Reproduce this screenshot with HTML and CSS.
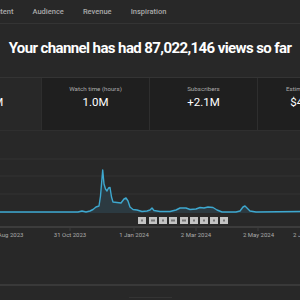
FILE: index.html
```html
<!DOCTYPE html>
<html lang="en">
<head>
  <meta charset="UTF-8">
  <meta name="viewport" content="width=device-width, initial-scale=1.0">
  <title>Channel analytics</title>
  <link rel="stylesheet" href="styles.css">
</head>

<body>
  <div class="studio">
    <!-- ===== TABS ===== -->
    <nav class="tabs">
      <a class="tab">Content</a>
      <a class="tab">Audience</a>
      <a class="tab">Revenue</a>
      <a class="tab">Inspiration</a>
    </nav>

    <!-- ===== HEADLINE ===== -->
    <h1 class="headline">Your channel has had 87,022,146 views so far</h1>

    <!-- ===== METRIC CARDS ===== -->
    <div class="cards">
      <div class="card active">
        <div class="card-label">Views</div>
        <div class="card-value">87.0M</div>
      </div>
      <div class="card">
        <div class="card-label">Watch time (hours)</div>
        <div class="card-value">1.0M</div>
      </div>
      <div class="card">
        <div class="card-label">Subscribers</div>
        <div class="card-value">+2.1M</div>
      </div>
      <div class="card">
        <div class="card-label">Estimated revenue</div>
        <div class="card-value">$440.4K</div>
      </div>
    </div>

    <!-- ===== CHART ===== -->
    <svg class="chart" width="300" height="105" viewBox="0 0 300 105">
      <line x1="0" y1="18" x2="300" y2="18" class="grid" />
      <line x1="0" y1="35" x2="300" y2="35" class="grid" />
      <line x1="0" y1="53" x2="300" y2="53" class="grid" />

      <path class="area" d="M0,71 L78,71 L82,70 L86,71 L90,70 L93,68.5 L96,66 L99,65 L100.5,55 L102.7,29 L104,43 L105.5,48 L107,50 L108.5,47 L110,46.5 L111.5,56 L113,61 L117,61.5 L121,62 L124,58 L126,57 L128,60 L130,66 L133,68.5 L137,69 L142,70.5 L147,70 L150,69 L152,67 L154,69.5 L160,70.5 L170,70.5 L176,69 L180,67 L186,67 L190,68.5 L196,68 L200,66.5 L204,67 L208,66 L213,66.5 L217,69 L222,71 L236,71 L240,70 L243,66 L245,65 L247,67 L250,70 L256,71 L300,70.5 L300,72 L0,72 Z" />
      <path class="trace" d="M0,71 L78,71 L82,70 L86,71 L90,70 L93,68.5 L96,66 L99,65 L100.5,55 L102.7,29 L104,43 L105.5,48 L107,50 L108.5,47 L110,46.5 L111.5,56 L113,61 L117,61.5 L121,62 L124,58 L126,57 L128,60 L130,66 L133,68.5 L137,69 L142,70.5 L147,70 L150,69 L152,67 L154,69.5 L160,70.5 L170,70.5 L176,69 L180,67 L186,67 L190,68.5 L196,68 L200,66.5 L204,67 L208,66 L213,66.5 L217,69 L222,71 L236,71 L240,70 L243,66 L245,65 L247,67 L250,70 L256,71 L300,70.5" />

      <!-- upload markers -->
      <g class="markers">
        <rect x="138" y="76" width="8" height="7" /><rect x="141" y="78.5" width="2" height="2" class="glyph" />
        <rect x="149" y="76" width="8" height="7" /><rect x="151" y="78.5" width="4" height="2" class="glyph" />
        <rect x="159" y="76" width="8" height="7" /><rect x="162" y="78.5" width="2" height="2" class="glyph" />
        <rect x="169" y="76" width="8" height="7" /><rect x="171" y="78.5" width="4" height="2" class="glyph" />
        <rect x="180" y="76" width="8" height="7" /><rect x="182" y="78.5" width="4" height="2" class="glyph" />
        <rect x="190" y="76" width="8" height="7" /><rect x="193" y="78.5" width="2" height="2" class="glyph" />
        <rect x="200" y="76" width="8" height="7" /><rect x="203" y="78.5" width="2" height="2" class="glyph" />
        <rect x="210" y="76" width="8" height="7" /><rect x="213" y="78.5" width="2" height="2" class="glyph" />
        <rect x="220" y="76" width="8" height="7" /><rect x="223" y="78.5" width="2" height="2" class="glyph" />
      </g>

      <!-- x axis -->
      <rect x="0" y="85" width="300" height="2" class="axis" />
      <line x1="70" y1="87" x2="70" y2="90" class="tick" />
      <line x1="134" y1="87" x2="134" y2="90" class="tick" />
      <line x1="196" y1="87" x2="196" y2="90" class="tick" />
      <line x1="258" y1="87" x2="258" y2="90" class="tick" />

      <text x="6.5" y="96" class="date">31 Aug 2023</text>
      <text x="70" y="96" class="date">31 Oct 2023</text>
      <text x="134" y="96" class="date">1 Jan 2024</text>
      <text x="196" y="96" class="date">2 Mar 2024</text>
      <text x="258.5" y="96" class="date">2 May 2024</text>
      <text x="307" y="96" class="date">2 Jul 2024</text>
    </svg>

    <!-- ===== FOOTER ===== -->
    <div class="divider"></div>
    <div class="handle"></div>
  </div>
</body>
</html>
```

FILE: styles.css
```css
html, body {
  margin: 0; padding: 0;
  width: 100%; height: 100%;
  background: #282828;
  overflow: hidden;
}

.studio {
  display: flex;
  flex-direction: column;
  width: 300px;
  font-family: Roboto, "Liberation Sans", sans-serif;
  color: #fff;
}

/* ---------------- Tabs ---------------- */
.tabs {
  display: flex;
  align-items: center;
  gap: 19px;
  height: 23px;
  margin-left: -13px;
  border-bottom: 1px solid #343434;
}
.tab {
  font-size: 7.5px;
  font-weight: 500;
  color: #aaa;
  white-space: nowrap;
}

/* ---------------- Headline ---------------- */
.headline {
  margin: 14px 0 19px;
  font-size: 15px;
  line-height: 20px;
  font-weight: 700;
  letter-spacing: -0.6px;
  text-align: center;
  white-space: nowrap;
}

/* ---------------- Cards ---------------- */
.cards {
  display: flex;
  margin-left: -67px;
  border-top: 1px solid #343434;
  border-bottom: 1px solid #2f2f2f;
}
.card {
  flex: 0 0 108px;
  height: 52px;
  box-sizing: border-box;
  padding-top: 7px;
  background: #1f1f1f;
  border-left: 1px solid #2e2e2e;
  text-align: center;
}
.card.active { background: #282828; border-left: none; }
.card-label {
  font-size: 6.2px;
  line-height: 8px;
  color: #aaa;
  white-space: nowrap;
}
.card-value {
  margin-top: 2px;
  font-size: 11.5px;
  line-height: 14px;
  white-space: nowrap;
}

/* ---------------- Chart ---------------- */
.chart { display: block; margin-top: 10px; overflow: visible; }
.chart .grid { stroke: #323232; stroke-width: 1; }
.chart .area { fill: #2c3a41; }
.chart .trace { fill: none; stroke: #3ea8cf; stroke-width: 1.4; stroke-linejoin: round; }
.chart .markers rect { fill: #c4c4c4; }
.chart .markers rect.glyph { fill: #777; }
.chart .axis { fill: #3c3c3c; }
.chart .tick { stroke: #3c3c3c; stroke-width: 1; }
.chart .date {
  font-family: Roboto, "Liberation Sans", sans-serif;
  font-size: 6px;
  fill: #aaa;
  text-anchor: middle;
}

/* ---------------- Footer ---------------- */
.divider {
  height: 2px;
  margin-top: 38px;
  background: #393939;
}
.handle {
  width: 43px;
  height: 1px;
  margin: 11px auto 0;
  background: #343434;
}
```
